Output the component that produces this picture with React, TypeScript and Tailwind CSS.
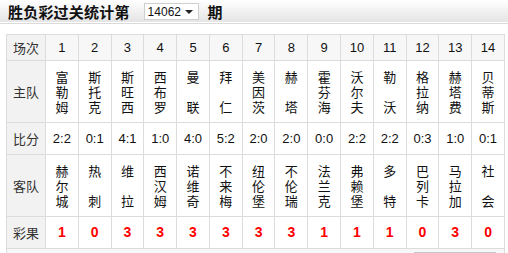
const home = ['富勒姆', '斯托克', '斯旺西', '西布罗', '曼联', '拜仁', '美因茨', '赫塔', '霍芬海', '沃尔夫', '勒沃', '格拉纳', '赫塔费', '贝蒂斯']
const away = ['赫尔城', '热刺', '维拉', '西汉姆', '诺维奇', '不来梅', '纽伦堡', '不伦瑞', '法兰克', '弗赖堡', '多特', '巴列卡', '马拉加', '社会']
const scores = ['2:2', '0:1', '4:1', '1:0', '4:0', '5:2', '2:0', '2:0', '0:0', '2:2', '2:2', '0:3', '1:0', '0:1']
const results = ['1', '0', '3', '3', '3', '3', '3', '3', '1', '1', '1', '0', '3', '0']

const cjk = "font-['Noto_Sans_CJK_SC','Liberation_Sans',sans-serif]"
const latin = "font-['Liberation_Sans','Noto_Sans_CJK_SC',sans-serif]"

// one character per line; two-character names leave the middle line empty
function TeamName({ name }: { name: string }) {
  const chars = name.split('')
  const text = chars.length === 2 ? `${chars[0]}\n\n${chars[1]}` : chars.join('\n')
  return <div className="whitespace-pre-line text-[13px] leading-[15px] text-[#111]">{text}</div>
}

const label = `border border-[#dcdcdc] bg-[#f2f2f2] text-center text-[13px] text-[#333] ${cjk}`
const cell = 'border border-[#dcdcdc] text-center p-0'

export default function App() {
  return (
    <div className={`w-[508px] h-[253px] overflow-hidden bg-white ${cjk}`}>
      <div className="h-[22px] bg-gradient-to-b from-white to-[#e4e4e4] flex items-center pl-[8px]">
        <span className="text-[15px] font-bold text-[#111] leading-none tracking-[0.2px]">胜负彩过关统计第</span>
        <div className={`ml-[14px] mt-[1px] flex h-[17px] w-[55px] items-center justify-between border border-[#cfcfcf] bg-white pl-[3px] pr-[5px] text-[12px] text-[#111] ${latin}`}>
          <span>14062</span>
          <span className="h-0 w-0 border-x-[4px] border-t-[4px] border-x-transparent border-t-[#222]" />
        </div>
        <span className="ml-[9px] text-[15px] font-bold text-[#111] leading-none">期</span>
      </div>
      <div className="h-[1px] bg-white" />
      <div className="h-[1px] bg-[#dadada]" />
      <div className="pl-[6px] pt-[10px]">
        <table className="w-[499px] table-fixed border-collapse">
          <colgroup>
            <col className="w-[39px]" />
            {home.map((_, i) => (
              <col key={i} />
            ))}
          </colgroup>
          <tbody>
            <tr className="h-[26px] bg-[#f7f7f7]">
              <td className={label}>场次</td>
              {home.map((_, i) => (
                <td key={i} className={`${cell} text-[13px] text-[#111] ${latin}`}>{i + 1}</td>
              ))}
            </tr>
            <tr className="h-[62px]">
              <td className={label}>主队</td>
              {home.map((n, i) => (
                <td key={i} className={cell}><TeamName name={n} /></td>
              ))}
            </tr>
            <tr className="h-[32px]">
              <td className={label}>比分</td>
              {scores.map((s, i) => (
                <td key={i} className={`${cell} text-[13px] text-[#111] ${latin}`}>{s}</td>
              ))}
            </tr>
            <tr className="h-[62px]">
              <td className={label}>客队</td>
              {away.map((n, i) => (
                <td key={i} className={cell}><TeamName name={n} /></td>
              ))}
            </tr>
            <tr className="h-[32px]">
              <td className={label}>彩果</td>
              {results.map((r, i) => (
                <td key={i} className={`${cell} text-[14px] font-bold text-[#ff0000] ${latin}`}>{r}</td>
              ))}
            </tr>
          </tbody>
        </table>
        <div className="relative h-[10px] w-[499px] border-x border-[#dcdcdc] bg-[#f7f7f7]">
          <div className="absolute left-[407px] top-[3px] h-[3px] w-[82px] bg-[#c8c8c8]" />
        </div>
      </div>
    </div>
  )
}
